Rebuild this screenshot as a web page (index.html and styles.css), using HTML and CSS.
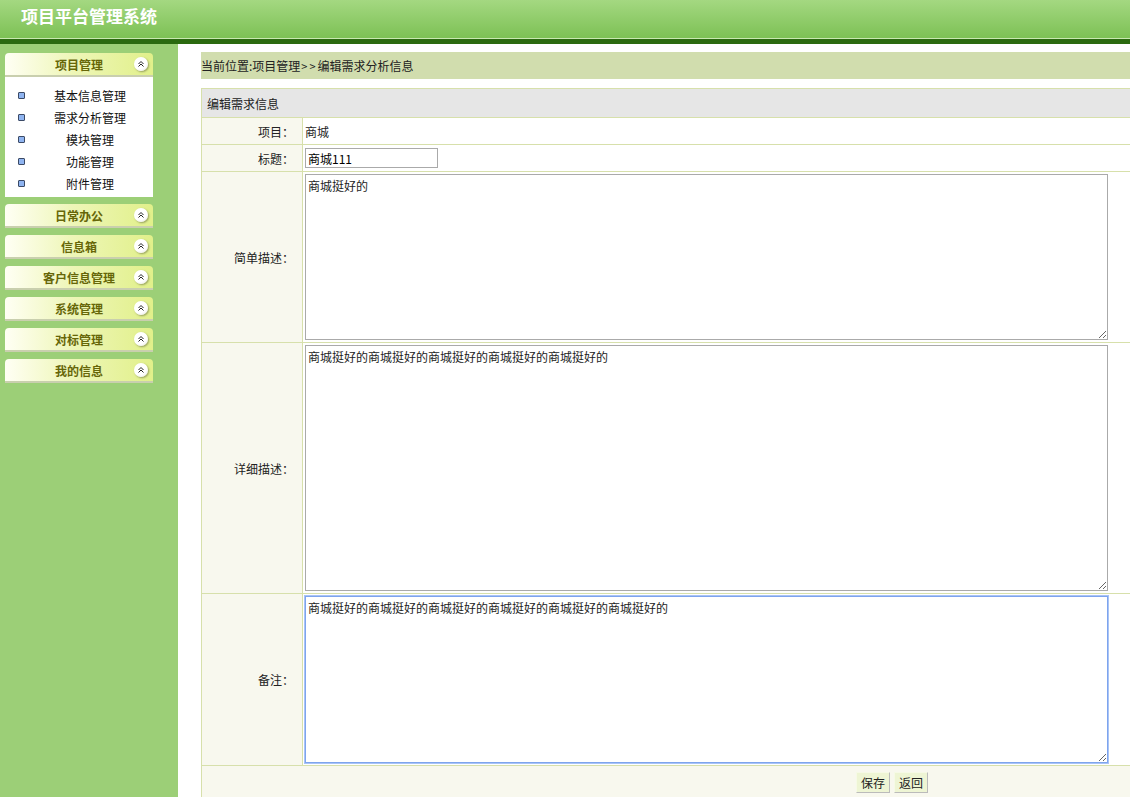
FILE: index.html
```html
<!DOCTYPE html>
<html lang="zh-CN">
<head>
<meta charset="utf-8">
<title>项目平台管理系统</title>
<link rel="stylesheet" href="styles.css">
</head>
<body>
<header class="top">
  <div class="brand">项目平台管理系统</div>
</header>
<div class="layout">
  <aside class="side">
    <div class="menu">
      <div class="menu-head">项目管理<span class="toggle"><svg viewBox="0 0 8 8" width="8" height="8"><path d="M1.5 4 L4 1.5 L6.5 4 M1.5 6.5 L4 4 L6.5 6.5" fill="none" stroke="#222" stroke-width="1"/></svg></span></div>
      <ul class="menu-list">
        <li><i class="dot"></i><span>基本信息管理</span></li>
        <li><i class="dot"></i><span>需求分析管理</span></li>
        <li><i class="dot"></i><span>模块管理</span></li>
        <li><i class="dot"></i><span>功能管理</span></li>
        <li><i class="dot"></i><span>附件管理</span></li>
      </ul>
    </div>
    <div class="menu"><div class="menu-head">日常办公<span class="toggle"><svg viewBox="0 0 8 8" width="8" height="8"><path d="M1.5 4 L4 1.5 L6.5 4 M1.5 6.5 L4 4 L6.5 6.5" fill="none" stroke="#222" stroke-width="1"/></svg></span></div></div>
    <div class="menu"><div class="menu-head">信息箱<span class="toggle"><svg viewBox="0 0 8 8" width="8" height="8"><path d="M1.5 4 L4 1.5 L6.5 4 M1.5 6.5 L4 4 L6.5 6.5" fill="none" stroke="#222" stroke-width="1"/></svg></span></div></div>
    <div class="menu"><div class="menu-head">客户信息管理<span class="toggle"><svg viewBox="0 0 8 8" width="8" height="8"><path d="M1.5 4 L4 1.5 L6.5 4 M1.5 6.5 L4 4 L6.5 6.5" fill="none" stroke="#222" stroke-width="1"/></svg></span></div></div>
    <div class="menu"><div class="menu-head">系统管理<span class="toggle"><svg viewBox="0 0 8 8" width="8" height="8"><path d="M1.5 4 L4 1.5 L6.5 4 M1.5 6.5 L4 4 L6.5 6.5" fill="none" stroke="#222" stroke-width="1"/></svg></span></div></div>
    <div class="menu"><div class="menu-head">对标管理<span class="toggle"><svg viewBox="0 0 8 8" width="8" height="8"><path d="M1.5 4 L4 1.5 L6.5 4 M1.5 6.5 L4 4 L6.5 6.5" fill="none" stroke="#222" stroke-width="1"/></svg></span></div></div>
    <div class="menu"><div class="menu-head">我的信息<span class="toggle"><svg viewBox="0 0 8 8" width="8" height="8"><path d="M1.5 4 L4 1.5 L6.5 4 M1.5 6.5 L4 4 L6.5 6.5" fill="none" stroke="#222" stroke-width="1"/></svg></span></div></div>
  </aside>
  <main class="main">
    <div class="crumb">当前位置:项目管理<span class="sep">&gt;&gt;</span>编辑需求分析信息</div>
    <table class="form">
      <tr><th colspan="2" class="caption">编辑需求信息</th></tr>
      <tr class="r-short"><td class="label">项目：</td><td class="val">商城</td></tr>
      <tr class="r-short"><td class="label">标题：</td><td class="val"><input class="txt" type="text" value="商城111"></td></tr>
      <tr><td class="label">简单描述：</td><td class="val"><textarea class="area a1">商城挺好的</textarea></td></tr>
      <tr><td class="label">详细描述：</td><td class="val"><textarea class="area a2">商城挺好的商城挺好的商城挺好的商城挺好的商城挺好的</textarea></td></tr>
      <tr><td class="label">备注：</td><td class="val"><textarea class="area a3 focus">商城挺好的商城挺好的商城挺好的商城挺好的商城挺好的商城挺好的</textarea></td></tr>
      <tr><td class="btns" colspan="2"><button class="btn">保存</button><button class="btn">返回</button></td></tr>
    </table>
  </main>
</div>
</body>
</html>
```

FILE: styles.css
```css
html, body {
  margin: 0;
  padding: 0;
  overflow: hidden;
  height: 100%;
}
body {
  font-family: "Noto Sans CJK SC", "Noto Sans", sans-serif;
  font-size: 12px;
  color: #222;
  background: #fff;
}
.top {
  height: 38px;
  background: linear-gradient(#a4d881, #7dc155);
  border-bottom: 1px solid #c9e8b0;
  box-shadow: 0 5px 0 #2b6a10;
  margin-bottom: 5px;
}
.brand {
  color: #fff;
  font-weight: bold;
  font-size: 17px;
  line-height: 32px;
  padding-left: 21px;
}
.layout {
  display: flex;
  height: calc(100% - 44px);
}
.side {
  width: 178px;
  flex: none;
  background: #9ccf77;
  padding: 9px 0 0 5px;
  box-sizing: border-box;
}
.menu {
  width: 148px;
  margin-bottom: 7px;
}
.menu-head {
  position: relative;
  height: 22px;
  line-height: 23px;
  text-align: center;
  font-weight: bold;
  font-size: 12px;
  color: #666608;
  background: linear-gradient(to right, #fffff4, #eef6b8 45%, #e1f08a);
  border-radius: 4px 4px 0 0;
  border-bottom: 2px solid #c9cfae;
}
.toggle {
  position: absolute;
  right: 5px;
  top: 4px;
  width: 14px;
  height: 14px;
  border-radius: 50%;
  background: radial-gradient(circle at 40% 35%, #fff 55%, #ddd);
  box-shadow: 1px 1px 2px rgba(0,0,0,0.35);
  display: flex;
  align-items: center;
  justify-content: center;
}
.menu-list {
  list-style: none;
  margin: 0;
  padding: 7px 0 3px;
  background: #fff;
}
.menu-list li {
  display: flex;
  align-items: center;
  height: 22px;
  color: #111;
}
.dot {
  width: 5px;
  height: 5px;
  margin-left: 13px;
  background: #8fb4f0;
  border: 1px solid #3b4a66;
  border-radius: 1px;
  flex: none;
}
.menu-list span {
  flex: 1;
  text-align: center;
  padding-left: 2px;
}
.main {
  flex: 1;
  padding: 8px 0 0 23px;
  overflow: hidden;
}
.crumb {
  height: 27px;
  line-height: 28px;
  background: #d1ddae;
  color: #222;
  margin-bottom: 9px;
  width: 1000px;
}
.sep {
  letter-spacing: 2px;
  margin-left: 1px;
  font-size: 11px;
}
.form {
  border-collapse: collapse;
  width: 1000px;
}
.form th, .form td {
  border: 1px solid #d7e0ab;
  padding: 0;
}
.caption {
  background: #e6e6e6;
  height: 28px;
  text-align: left;
  font-weight: normal;
  padding-left: 5px !important;
  color: #222;
}
.label {
  width: 101px;
  background: #f8f8ee;
  text-align: right;
  padding-right: 8px !important;
  box-sizing: border-box;
  color: #222;
}
.val {
  padding: 2px 2px !important;
  color: #222;
}
.r-short td {
  height: 22px;
}
.txt {
  width: 133px;
  height: 20px;
  box-sizing: border-box;
  border: 1px solid #aaa;
  font: 12px "Noto Sans CJK SC", sans-serif;
  padding: 0 2px;
  display: block;
}
.area {
  display: block;
  width: 803px;
  box-sizing: border-box;
  border: 1px solid #aaa;
  font: 12px "Noto Sans CJK SC", sans-serif;
  padding: 2px 2px;
  margin: 0;
  color: #222;
}
.a1 { height: 166px; }
.a2 { height: 246px; }
.a3 { height: 167px; }
.focus {
  border: 1px solid #7ea4ee;
  box-shadow: 0 0 0 1px #a9c4f5;
}
.btns {
  height: 32px;
  background: #f8f8ee;
  padding-left: 654px !important;
}
.btn {
  font: 12px "Noto Sans CJK SC", sans-serif;
  background: #eef5d4;
  border: 1px solid #f6fae6;
  border-right-color: #bbb;
  border-bottom-color: #bbb;
  height: 21px;
  padding: 0 4px;
  margin-right: 4px;
  color: #222;
  vertical-align: middle;
}
```
